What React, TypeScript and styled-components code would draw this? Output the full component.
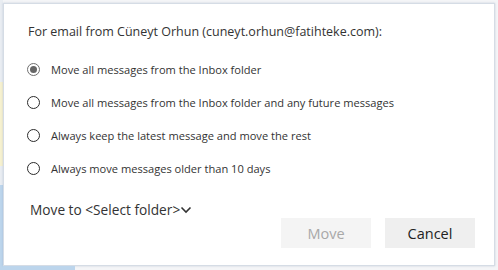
import styled, { createGlobalStyle } from "styled-components";

const GlobalStyle = createGlobalStyle`
  html, body {
    margin: 0;
    padding: 0;
    background: #f4f5f7;
  }
  body {
    font-family: "Open Sans", "Liberation Sans", sans-serif;
  }
`;

const Page = styled.div`
  width: 498px;
  height: 270px;
  display: grid;
  grid-template-columns: 3px 1fr 3px;
  grid-template-rows: 3px 1fr 4px;
  overflow: hidden;
`;

const LeftStrip = styled.div`
  grid-column: 1;
  grid-row: 1 / 4;
  display: flex;
  flex-direction: column;
`;

const StripPart = styled.div<{ $h: number; $color: string }>`
  height: ${(p) => p.$h}px;
  flex-shrink: 0;
  background: ${(p) => p.$color};
`;

const BottomStrip = styled.div`
  grid-column: 2 / 4;
  grid-row: 3;
  display: flex;
`;

const BottomBlue = styled.div`
  width: 72px;
  background: #bcd5ec;
`;

const Dialog = styled.div`
  grid-column: 2;
  grid-row: 2;
  background: #ffffff;
  border: 1px solid #d5dce5;
  box-shadow: 0 0 2px rgba(120, 140, 170, 0.35);
  padding: 20px 19px 15px 24px;
  display: flex;
  flex-direction: column;
  color: #333333;
`;

const Heading = styled.div`
  font-size: 12.5px;
  line-height: 16px;
  color: #333333;
`;

const Options = styled.div`
  margin-top: 19px;
  display: flex;
  flex-direction: column;
  gap: 13px;
`;

const Option = styled.label`
  display: flex;
  align-items: center;
  gap: 11px;
  height: 20px;
  font-size: 11.1px;
  color: #333333;
`;

const Radio = styled.span<{ $checked?: boolean }>`
  width: 13px;
  height: 13px;
  box-sizing: border-box;
  border-radius: 50%;
  border: 1px solid ${(p) => (p.$checked ? "#6f6f6f" : "#2b2b2b")};
  display: flex;
  align-items: center;
  justify-content: center;
  margin-left: -1px;
  &::after {
    content: "";
    width: 7px;
    height: 7px;
    border-radius: 50%;
    background: #666666;
    display: ${(p) => (p.$checked ? "block" : "none")};
  }
`;

const MoveTo = styled.div`
  margin-top: 22px;
  margin-left: 2px;
  display: flex;
  align-items: center;
  gap: 0;
  font-size: 13.7px;
  line-height: 20px;
  color: #333333;
`;

const Buttons = styled.div`
  display: flex;
  justify-content: flex-end;
  gap: 14px;
  margin-top: -2px;
`;

const Button = styled.button<{ $disabled?: boolean }>`
  width: 90px;
  height: 30px;
  border: none;
  font-family: "Open Sans", "Liberation Sans", sans-serif;
  font-size: 14.5px;
  font-weight: 400;
  background: ${(p) => (p.$disabled ? "#f4f4f4" : "#efefef")};
  color: ${(p) => (p.$disabled ? "#a8a8a8" : "#222222")};
  padding: 0;
`;

const options = [
  "Move all messages from the Inbox folder",
  "Move all messages from the Inbox folder and any future messages",
  "Always keep the latest message and move the rest",
  "Always move messages older than 10 days",
];

export default function App() {
  return (
    <>
      <GlobalStyle />
      <Page>
        <LeftStrip>
          <StripPart $h={82} $color="#e9edf2" />
          <StripPart $h={84} $color="#f6f1cf" />
          <StripPart $h={19} $color="#e9edf2" />
          <StripPart $h={85} $color="#bcd5ec" />
        </LeftStrip>
        <Dialog>
          <Heading>For email from Cüneyt Orhun (cuneyt.orhun@fatihteke.com):</Heading>
          <Options>
            {options.map((text, i) => (
              <Option key={i}>
                <Radio $checked={i === 0} />
                {text}
              </Option>
            ))}
          </Options>
          <MoveTo>
            Move to &lt;Select folder&gt;
            <svg width="12" height="12" viewBox="0 0 12 12">
              <path d="M1.5 3.5 L6 8 L10.5 3.5" fill="none" stroke="#333" strokeWidth="1.6" />
            </svg>
          </MoveTo>
          <Buttons>
            <Button $disabled>Move</Button>
            <Button>Cancel</Button>
          </Buttons>
        </Dialog>
        <BottomStrip>
          <BottomBlue />
        </BottomStrip>
      </Page>
    </>
  );
}
